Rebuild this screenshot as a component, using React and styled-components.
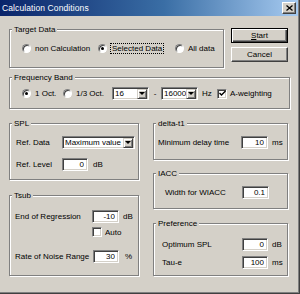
import React from "react";
import styled, { createGlobalStyle } from "styled-components";

const GlobalStyle = createGlobalStyle`
  html, body { margin: 0; padding: 0; background: #d4d0c8; }
  body {
    font-family: "Liberation Sans", Arial, sans-serif;
    font-size: 8px;
    color: #000;
  }
`;

const Window = styled.div`
  box-sizing: border-box;
  width: 300px;
  height: 294px;
  background: #d4d0c8;
  border-right: 1px solid #404040;
  border-bottom: 1px solid #404040;
  box-shadow: inset -1px -1px 0 #808080;
  overflow: hidden;
`;

const TitleBar = styled.div`
  display: flex;
  align-items: center;
  justify-content: space-between;
  height: 16px;
  padding: 0 2px 0 2px;
  margin-right: 1px;
  background: linear-gradient(90deg, #0a246a 0%, #3a6ea5 55%, #a6caf0 100%);
`;

const TitleText = styled.span`
  color: #fff;
  font-size: 8.5px;
  letter-spacing: 0.1px;
`;

const raised = `
  background: #d4d0c8;
  border: 1px solid;
  border-color: #fff #404040 #404040 #fff;
  box-shadow: inset -1px -1px 0 #808080;
`;

const CloseButton = styled.span`
  box-sizing: border-box;
  display: flex;
  align-items: center;
  justify-content: center;
  width: 14px;
  height: 12px;
  ${raised}
`;

const Body = styled.div`
  padding: 13px 0 0 9px;
`;

const TopRow = styled.div`
  display: flex;
  align-items: flex-start;
  gap: ${(p) => p.$gap || 7}px;
  margin-top: ${(p) => p.$mt || 0}px;
`;

const Column = styled.div`
  width: ${(p) => p.$w}px;
`;

const ButtonColumn = styled.div`
  display: flex;
  flex-direction: column;
  gap: 4px;
  width: 57px;
  margin-top: -1px;
`;

const Button = styled.div`
  box-sizing: border-box;
  height: 15px;
  display: flex;
  align-items: center;
  justify-content: center;
  ${raised}
  ${(p) =>
    p.$default &&
    `
    border-color: #000;
    box-shadow: inset 1px 1px 0 #fff, inset -1px -1px 0 #404040, inset -2px -2px 0 #808080;
  `}
`;

const Group = styled.div`
  box-sizing: border-box;
  width: ${(p) => p.$w}px;
  height: ${(p) => p.$h}px;
  margin-top: ${(p) => p.$mt || 0}px;
  border: 1px solid #808080;
  box-shadow: 1px 1px 0 #fff, inset 1px 1px 0 #fff;
`;

const Caption = styled.div`
  width: max-content;
  height: 11px;
  line-height: 11px;
  margin: -6px 0 0 2px;
  padding: 0 2px;
  background: #d4d0c8;
`;

const Row = styled.div`
  display: flex;
  align-items: center;
  height: ${(p) => p.$h || 13}px;
  margin-top: ${(p) => p.$mt || 0}px;
  padding-left: ${(p) => p.$pl || 0}px;
  white-space: nowrap;
`;

const Label = styled.span`
  flex: none;
  width: ${(p) => p.$w}px;
`;

const Unit = styled.span`
  margin-left: ${(p) => p.$ml || 4}px;
  width: ${(p) => (p.$w ? `${p.$w}px` : "auto")};
`;

const sunken = `
  background: #fff;
  border: 1px solid;
  border-color: #808080 #fff #fff #808080;
  box-shadow: inset 1px 1px 0 #404040, inset -1px -1px 0 #d4d0c8;
`;

const Input = styled.input`
  box-sizing: border-box;
  flex: none;
  width: ${(p) => p.$w}px;
  height: 13px;
  margin: 0;
  padding: 0 3px 0 0;
  font: inherit;
  color: #000;
  text-align: right;
  outline: none;
  ${sunken}
`;

const Combo = styled.div`
  box-sizing: border-box;
  flex: none;
  display: flex;
  align-items: center;
  width: ${(p) => p.$w}px;
  height: 13px;
  padding: 0 1px 0 2px;
  ${sunken}
`;

const ComboText = styled.span`
  flex: 1;
`;

const DropButton = styled.span`
  box-sizing: border-box;
  flex: none;
  display: flex;
  align-items: center;
  justify-content: center;
  width: 10px;
  height: 10px;
  background: #d4d0c8;
  border: 1px solid;
  border-color: #d4d0c8 #404040 #404040 #d4d0c8;
  box-shadow: inset 1px 1px 0 #fff, inset -1px -1px 0 #808080;
  &::after {
    content: "";
    width: 0;
    height: 0;
    border-left: 3px solid transparent;
    border-right: 3px solid transparent;
    border-top: 3px solid #000;
  }
`;

const Dash = styled.span`
  flex: none;
  width: 12px;
  text-align: center;
`;

const Option = styled.label`
  flex: none;
  display: flex;
  align-items: center;
  gap: ${(p) => p.$gap || 4}px;
  width: ${(p) => (p.$w ? `${p.$w}px` : "auto")};
`;

const RadioDot = styled.span`
  box-sizing: border-box;
  flex: none;
  display: flex;
  align-items: center;
  justify-content: center;
  width: 9px;
  height: 9px;
  border-radius: 50%;
  background: #fff;
  border: 1px solid;
  border-color: #808080 #fff #fff #808080;
  box-shadow: inset 1px 1px 0 #404040;
  &::after {
    content: "";
    display: ${(p) => (p.$on ? "block" : "none")};
    width: 3px;
    height: 3px;
    border-radius: 50%;
    background: #000;
  }
`;

const CheckBox = styled.span`
  box-sizing: border-box;
  flex: none;
  display: flex;
  align-items: center;
  justify-content: center;
  width: 10px;
  height: 10px;
  ${sunken}
`;

const Focused = styled.span`
  outline: 1px dotted #000;
  padding: 0 1px;
`;

function Radio({ on, w, focus, children }) {
  return (
    <Option $w={w}>
      <RadioDot $on={on} />
      {focus ? <Focused>{children}</Focused> : <span>{children}</span>}
    </Option>
  );
}

function Check({ on, children }) {
  return (
    <Option $gap={3}>
      <CheckBox>
        {on && (
          <svg width="7" height="7" viewBox="0 0 7 7">
            <path d="M0.5 3 L2.5 5 L6.5 1" stroke="#000" strokeWidth="1.4" fill="none" />
          </svg>
        )}
      </CheckBox>
      <span>{children}</span>
    </Option>
  );
}

function Dropdown({ w, value }) {
  return (
    <Combo $w={w}>
      <ComboText>{value}</ComboText>
      <DropButton />
    </Combo>
  );
}

export default function App() {
  return (
    <>
      <GlobalStyle />
      <Window>
        <TitleBar>
          <TitleText>Calculation Conditions</TitleText>
          <CloseButton>
            <svg width="7" height="6" viewBox="0 0 7 6">
              <path d="M0.5 0.5 L6.5 5.5 M6.5 0.5 L0.5 5.5" stroke="#000" strokeWidth="1.3" />
            </svg>
          </CloseButton>
        </TitleBar>
        <Body>
          <TopRow>
            <Group $w={215} $h={39}>
              <Caption>Target Data</Caption>
              <Row $mt={7} $pl={12}>
                <Radio w={76}>non Calculation</Radio>
                <Radio w={77} on focus>Selected Data</Radio>
                <Radio>All data</Radio>
              </Row>
            </Group>
            <ButtonColumn>
              <Button $default>
                <span><u>S</u>tart</span>
              </Button>
              <Button>Cancel</Button>
            </ButtonColumn>
          </TopRow>

          <Group $w={281} $h={32} $mt={9}>
            <Caption>Frequency Band</Caption>
            <Row $mt={4} $pl={12}>
              <Radio w={41} on>1 Oct.</Radio>
              <Radio w={49}>1/3 Oct.</Radio>
              <Dropdown w={37} value="16" />
              <Dash>-</Dash>
              <Dropdown w={37} value="16000" />
              <Unit $ml={4} $w={15}>Hz</Unit>
              <Check on>A-weighting</Check>
            </Row>
          </Group>

          <TopRow $gap={14} $mt={14}>
            <Column $w={130}>
              <Group $w={130} $h={57}>
                <Caption>SPL</Caption>
                <Row $mt={7} $pl={6}>
                  <Label $w={46}>Ref. Data</Label>
                  <Dropdown w={73} value="Maximum value" />
                </Row>
                <Row $mt={9} $pl={6}>
                  <Label $w={46}>Ref. Level</Label>
                  <Input $w={26} defaultValue="0" />
                  <Unit $ml={5}>dB</Unit>
                </Row>
              </Group>
              <Group $w={130} $h={81} $mt={15}>
                <Caption>Tsub</Caption>
                <Row $mt={9} $pl={5}>
                  <Label $w={77}>End of Regression</Label>
                  <Input $w={27} defaultValue="-10" />
                  <Unit $ml={4}>dB</Unit>
                </Row>
                <Row $mt={4} $pl={82} $h={10}>
                  <Check>Auto</Check>
                </Row>
                <Row $mt={13} $pl={5}>
                  <Label $w={78}>Rate of Noise Range</Label>
                  <Input $w={26} defaultValue="30" />
                  <Unit $ml={6}>%</Unit>
                </Row>
              </Group>
            </Column>
            <Column $w={135}>
              <Group $w={135} $h={37}>
                <Caption>delta-t1</Caption>
                <Row $mt={7} $pl={4}>
                  <Label $w={83}>Minimum delay time</Label>
                  <Input $w={27} defaultValue="10" />
                  <Unit $ml={4}>ms</Unit>
                </Row>
              </Group>
              <Group $w={135} $h={36} $mt={13}>
                <Caption>IACC</Caption>
                <Row $mt={7} $pl={11}>
                  <Label $w={77}>Width for WIACC</Label>
                  <Input $w={27} defaultValue="0.1" />
                </Row>
              </Group>
              <Group $w={135} $h={53} $mt={14}>
                <Caption>Preference</Caption>
                <Row $mt={9} $pl={8}>
                  <Label $w={80}>Optimum SPL</Label>
                  <Input $w={26} defaultValue="0" />
                  <Unit $ml={4}>dB</Unit>
                </Row>
                <Row $mt={5} $pl={8}>
                  <Label $w={80}>Tau-e</Label>
                  <Input $w={26} defaultValue="100" />
                  <Unit $ml={4}>ms</Unit>
                </Row>
              </Group>
            </Column>
          </TopRow>
        </Body>
      </Window>
    </>
  );
}
